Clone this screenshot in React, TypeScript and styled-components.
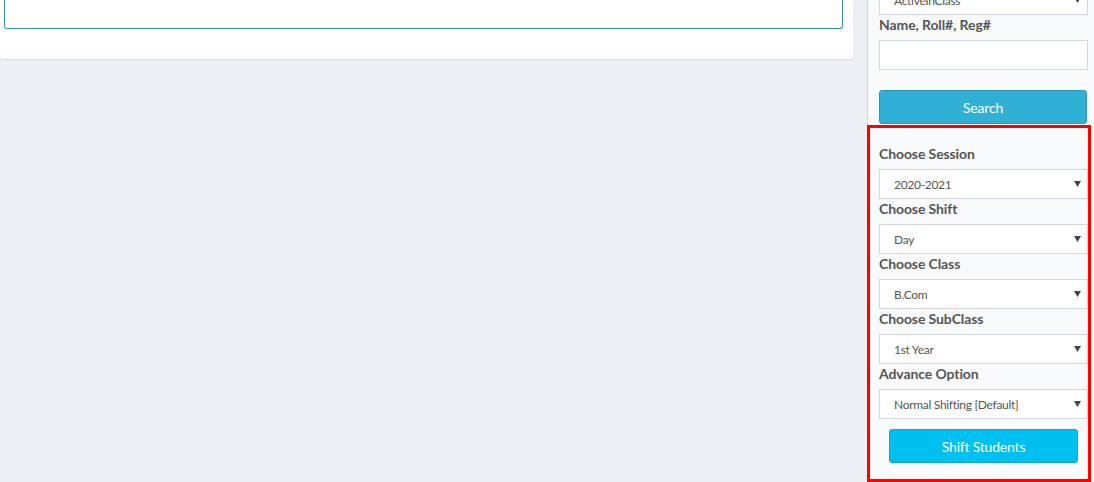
import React from "react";
import styled, { createGlobalStyle } from "styled-components";

const GlobalStyle = createGlobalStyle`
  html, body { margin: 0; padding: 0; }
  body {
    font-family: Lato, "Liberation Sans", Arial, sans-serif;
    background: #ecf0f5;
    overflow: hidden;
  }
  * { box-sizing: border-box; }
`;

const Layout = styled.div`
  display: flex;
  width: 1094px;
  height: 482px;
  overflow: hidden;
  background: #ecf0f5;
`;

const Main = styled.main`
  width: 867px;
  flex: none;
  padding-right: 14px;
`;

const Card = styled.div`
  background: #fff;
  border-radius: 0 0 3px 3px;
  box-shadow: 0 1px 1px rgba(0, 0, 0, 0.1);
  padding: 0 10px 30px 4px;
`;

const FormBox = styled.div`
  height: 29px;
  border: 1px solid #3c8dbc;
  border-top: 0;
  border-radius: 0 0 3px 3px;
  background: #fff;
`;

const Sidebar = styled.aside`
  width: 227px;
  flex: none;
  background: #f9fafc;
  border-left: 1px solid #d2d6de;
  display: flex;
  flex-direction: column;
`;

const TopPart = styled.div`
  margin-top: -15px;
  padding: 0 6px 0 11px;
  display: flex;
  flex-direction: column;
`;

const Highlight = styled.section`
  margin: 1px 3px 0 -1px;
  border: 3px solid #ff0000;
  padding: 16px 0 16px 9px;
  display: flex;
  flex-direction: column;
`;

const Label = styled.label`
  display: block;
  font-size: 14px;
  line-height: 20px;
  font-weight: 700;
  color: #555;
  margin-bottom: 5px;
  white-space: nowrap;
  letter-spacing: -0.1px;
`;

const SelectBox = styled.div`
  position: relative;
  width: 209px;
  height: 30px;
  border: 1px solid #d2d6de;
  background: #fff;
  display: flex;
  align-items: center;
  padding-left: 14px;
  font-size: 12px;
  letter-spacing: -0.3px;
  color: #555;
  white-space: nowrap;
`;

const Arrow = styled.svg`
  position: absolute;
  right: 6px;
  top: 50%;
  margin-top: -3px;
  width: 7px;
  height: 6px;
`;

const TextInput = styled.div`
  width: 209px;
  height: 30px;
  border: 1px solid #d2d6de;
  background: #fff;
`;

const Button = styled.button<{ $variant: "search" | "shift" }>`
  display: block;
  height: 34px;
  border-radius: 3px;
  font-family: inherit;
  font-size: 14px;
  letter-spacing: -0.2px;
  color: #fff;
  cursor: pointer;
  padding: 0;
  background: ${(p) => (p.$variant === "search" ? "#31b0d5" : "#00c0ef")};
  border: 1px solid ${(p) => (p.$variant === "search" ? "#269abc" : "#00acd6")};
  width: ${(p) => (p.$variant === "search" ? "208px" : "189px")};
  margin: ${(p) => (p.$variant === "search" ? "20px 0 0 0" : "10px 0 0 10px")};
`;

const Select: React.FC<{ value: string }> = ({ value }) => (
  <SelectBox>
    {value}
    <Arrow viewBox="0 0 7 6">
      <path d="M0 0 H7 L3.5 6 Z" fill="#444" />
    </Arrow>
  </SelectBox>
);

const fields: [string, string][] = [
  ["Choose Session", "2020-2021"],
  ["Choose Shift", "Day"],
  ["Choose Class", "B.Com"],
  ["Choose SubClass", "1st Year"],
  ["Advance Option", "Normal Shifting [Default]"],
];

export default function App() {
  return (
    <>
      <GlobalStyle />
      <Layout>
        <Main>
          <Card>
            <FormBox />
          </Card>
        </Main>
        <Sidebar>
          <TopPart>
            <Select value="ActiveInClass" />
            <Label>Name, Roll#, Reg#</Label>
            <TextInput />
            <Button $variant="search">Search</Button>
          </TopPart>
          <Highlight>
            {fields.map(([label, value]) => (
              <React.Fragment key={label}>
                <Label>{label}</Label>
                <Select value={value} />
              </React.Fragment>
            ))}
            <Button $variant="shift">Shift Students</Button>
          </Highlight>
        </Sidebar>
      </Layout>
    </>
  );
}
